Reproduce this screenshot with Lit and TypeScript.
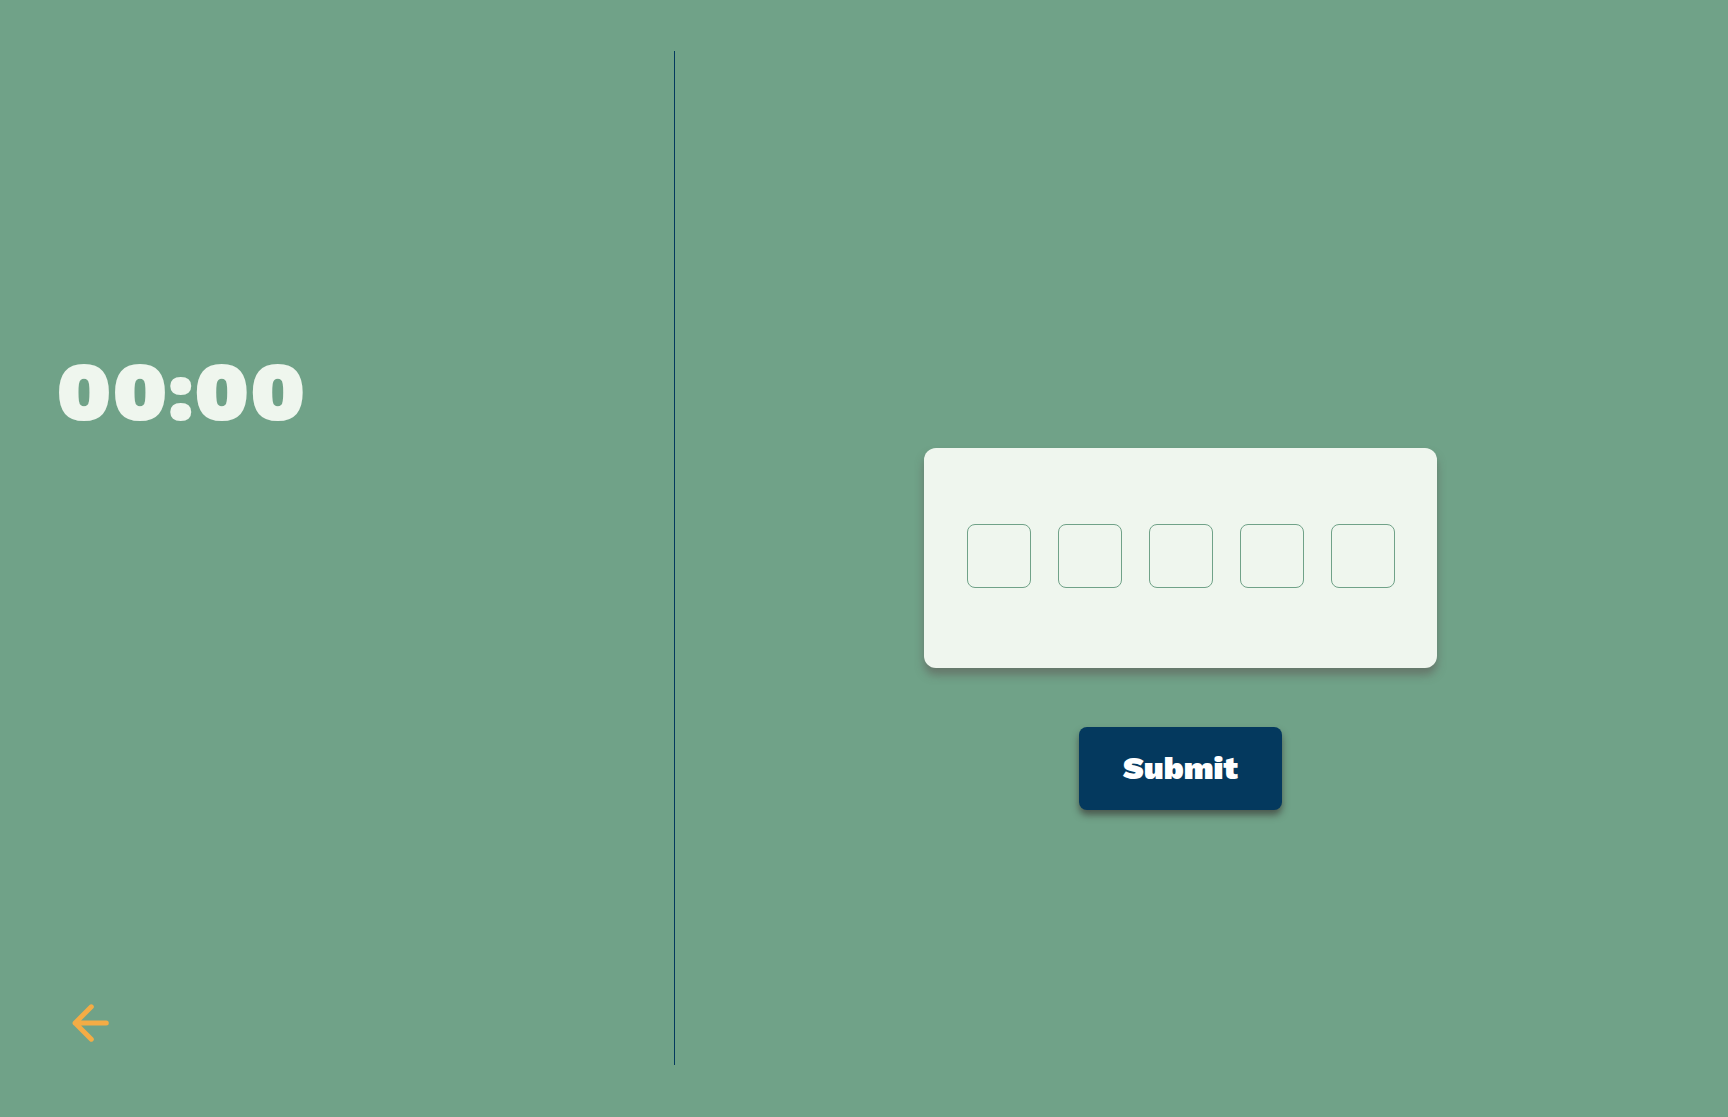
import { LitElement, html, css } from "lit";
import { customElement, state } from "lit/decorators.js";

const CODE_LENGTH = 5;

@customElement("app-root")
export class AppRoot extends LitElement {
  static styles = css`
    :host {
      display: block;
      font-family: "Work Sans", Inter, "Liberation Sans", sans-serif;
    }
    .page {
      display: grid;
      grid-template-columns: 39% 1px 1fr;
      min-height: 100vh;
      box-sizing: border-box;
      background: #70a288;
    }
    .side {
      display: flex;
      flex-direction: column;
      justify-content: space-between;
      align-items: flex-start;
      padding: 343px 56px 74px;
    }
    .timer {
      color: #eff6ee;
      font-size: 85px;
      line-height: 96px;
      font-weight: 900;
    }
    .back {
      display: block;
      margin-left: 14px;
    }
    .back svg {
      display: block;
    }
    .divider {
      margin: 51px 0 52px;
      background: #04395e;
    }
    .entry {
      display: flex;
      flex-direction: column;
      align-items: center;
      justify-content: center;
      gap: 59px;
      padding: 141px 42px 0 0;
    }
    .card {
      display: flex;
      gap: 27px;
      padding: 76px 42px 80px 43px;
      border-radius: 12px;
      background: #eff6ee;
      box-shadow: 0 7px 9px rgba(92, 77, 77, 0.5);
    }
    .digit {
      width: 64px;
      height: 64px;
      box-sizing: border-box;
      margin: 0;
      padding: 0;
      border: 1px solid #70a288;
      border-radius: 8px;
      background: transparent;
      color: #04395e;
      font: inherit;
      font-size: 32px;
      font-weight: 900;
      text-align: center;
    }
    .submit {
      padding: 22px 44px;
      border: 0;
      border-radius: 8px;
      background: #04395e;
      color: #ffffff;
      font: inherit;
      font-size: 32px;
      line-height: 39px;
      font-weight: 900;
      box-shadow: 0 5px 7px rgba(50, 40, 40, 0.6);
      cursor: pointer;
    }
  `;

  @state() private digits: string[] = Array(CODE_LENGTH).fill("");

  private onDigit(index: number, event: Event) {
    const input = event.target as HTMLInputElement;
    this.digits = this.digits.map((d, i) => (i === index ? input.value : d));
    if (input.value) {
      (input.nextElementSibling as HTMLInputElement | null)?.focus();
    }
  }

  render() {
    return html`
      <main class="page">
        <section class="side">
          <div class="timer" role="timer">00:00</div>
          <a class="back" href="#" aria-label="Back">
            <svg width="40" height="40" viewBox="0 0 40 40" fill="none" stroke="#f4ac45"
              stroke-width="5" stroke-linecap="round" stroke-linejoin="round" aria-hidden="true">
              <path d="M21.3 3.8 L5.1 20 L21.3 36.2 M5.1 20 H36.3" />
            </svg>
          </a>
        </section>
        <div class="divider"></div>
        <form class="entry" @submit=${(e: Event) => e.preventDefault()}>
          <div class="card">
            ${this.digits.map(
              (digit, i) => html`<input
                class="digit"
                type="text"
                inputmode="numeric"
                maxlength="1"
                autocomplete="off"
                aria-label="Digit ${i + 1}"
                .value=${digit}
                @input=${(e: Event) => this.onDigit(i, e)}
              />`
            )}
          </div>
          <button class="submit" type="submit">Submit</button>
        </form>
      </main>
    `;
  }
}
